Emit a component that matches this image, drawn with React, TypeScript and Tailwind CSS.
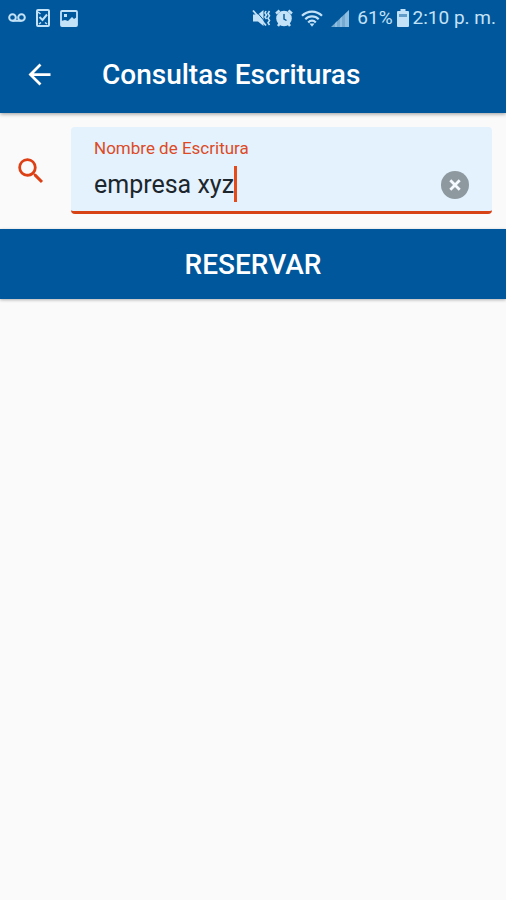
import { useRef, useState } from "react";
import { MdArrowBack, MdSearch } from "react-icons/md";

// status bar glyphs
function VoicemailIcon() {
  return (
    <svg width="18" height="12" viewBox="0 0 18 12" fill="none" stroke="currentColor" strokeWidth="2">
      <circle cx="4.5" cy="5.5" r="3.3" />
      <circle cx="13.5" cy="5.5" r="3.3" />
      <path d="M4.5 8.8h9" />
    </svg>
  );
}

function TaskIcon() {
  return (
    <svg width="14" height="18" viewBox="0 0 14 18" fill="none" stroke="currentColor" strokeWidth="2">
      <rect x="1" y="1" width="12" height="16" rx="1" />
      <path d="M3.5 8l3 3L11 5.5" />
      <path d="M2 3l2.5 2M3 15l2-1.5M11 15l-2-1.5" strokeWidth="1.5" />
    </svg>
  );
}

function PictureIcon() {
  return (
    <svg width="18" height="17" viewBox="0 0 18 17" fill="none">
      <rect x="1" y="1" width="16" height="15" rx="1" stroke="currentColor" strokeWidth="1.8" />
      <rect x="4" y="4" width="3" height="3" fill="currentColor" />
      <path d="M1 11l4-1 3 1 4-4 2 2 3-2v9H1z" fill="currentColor" />
    </svg>
  );
}

function MutedIcon() {
  return (
    <svg width="19" height="18" viewBox="0 0 19 18" fill="none">
      <path d="M1 5.5h5L11.5 1v16L6 12.5H1z" fill="currentColor" />
      <path d="M3 1l12 14" stroke="#01579b" strokeWidth="1" />
      <path d="M1 1.500l13 15" stroke="currentColor" strokeWidth="1.8" />
      <path
        d="M14 2l-1 2 1.500 2L13 8l1.500 2M17.500 2L16 4.500l1.500 2.300L16 9.200l1.500 2.300-1.500 2.300 1.500 2.200"
        stroke="currentColor"
        strokeWidth="1.6"
      />
    </svg>
  );
}

function AlarmIcon() {
  return (
    <svg width="18" height="18" viewBox="0 0 18 18" fill="none">
      <circle cx="9" cy="9.5" r="7.8" fill="currentColor" />
      <path d="M1 4.500L4.500 1.500M17 4.500l-3.500-3M3 17l2-3M15 17l-2-3" stroke="currentColor" strokeWidth="2.4" />
      <path d="M9 5v5l2.500 1.500" stroke="#01579b" strokeWidth="1.4" />
    </svg>
  );
}

function WifiIcon() {
  return (
    <svg width="22" height="17" viewBox="0 0 22 17" fill="none" stroke="currentColor" strokeWidth="2.2">
      <path d="M1 5.8C6.5 .2 15.5 .2 21 5.8" />
      <path d="M4.3 9.2C8 5.5 14 5.5 17.7 9.2" />
      <path d="M7.2 12.4C9.5 10 12.5 10 14.8 12.4" />
      <path d="M8.5 13.5h5L11 16.8z" fill="currentColor" stroke="none" />
    </svg>
  );
}

function SignalIcon() {
  return (
    <svg width="18" height="17" viewBox="0 0 18 17" fill="currentColor">
      <path d="M0 17L18 0v17z" opacity=".6" />
      <path d="M4 13l2-2v6H4zM9 8.5l2-2V17H9zM14 4l4-4v17h-4z" opacity=".35" />
    </svg>
  );
}

function BatteryIcon() {
  return (
    <svg width="12" height="18" viewBox="0 0 12 18" fill="currentColor">
      <path d="M3.5 0h5v2H11q1 0 1 1v14q0 1-1 1H1q-1 0-1-1V3q0-1 1-1h2.5z" />
      <path d="M2 5h8v3H2z" fill="#01579b" opacity=".5" />
    </svg>
  );
}

function ClearIcon() {
  return (
    <svg width="28" height="28" viewBox="0 0 28 28" fill="none">
      <circle cx="14" cy="14" r="14" fill="currentColor" />
      <path d="M9.3 9.3l9.4 9.4M18.7 9.3l-9.4 9.4" stroke="#f4faff" strokeWidth="2.8" />
    </svg>
  );
}

function StatusBar() {
  return (
    <div className="flex h-9 items-center justify-between pr-2.5 pl-2 text-[#c3e2f8]">
      <div className="flex items-center gap-2.5">
        <VoicemailIcon />
        <TaskIcon />
        <PictureIcon />
      </div>
      <div className="flex items-center gap-2 text-[19px] whitespace-nowrap">
        <div className="flex items-center gap-2">
          <div className="flex items-center gap-1">
            <MutedIcon />
            <AlarmIcon />
          </div>
          <WifiIcon />
          <SignalIcon />
        </div>
        <div className="flex items-center gap-1">
          <span>61%</span>
          <BatteryIcon />
          <span>2:10 p. m.</span>
        </div>
      </div>
    </div>
  );
}

function App() {
  const [name, setName] = useState("empresa xyz");
  const inputRef = useRef<HTMLInputElement | null>(null);

  const clearName = () => {
    setName("");
    inputRef.current?.focus();
  };

  return (
    <div className="min-h-screen bg-[#fafafa] font-[Roboto,sans-serif]">
      <header className="relative bg-[#01579b] text-white shadow-[0_1px_4px_rgba(0,0,0,0.4)]">
        <StatusBar />
        <div className="flex h-[77px] items-center gap-[46px] pl-[23px]">
          <button type="button" aria-label="Volver" className="cursor-pointer">
            <MdArrowBack size={33} />
          </button>
          <h1 className="text-[28px] font-medium whitespace-nowrap">Consultas Escrituras</h1>
        </div>
      </header>

      <main>
        <div className="flex items-center gap-[23px] px-3.5 pt-3.5 pb-[15px]">
          <MdSearch size={34} className="shrink-0 text-[#dd4014]" />
          <div className="flex h-[87px] min-w-0 flex-1 items-end rounded border-b-[3px] border-[#d84315] bg-[#e3f2fd] pr-[23px] pl-[23px]">
            <div className="min-w-0 flex-1 self-start pt-[11px]">
              <label htmlFor="nombre" className="block text-[17px] leading-5 text-[#dd4a25]">
                Nombre de Escritura
              </label>
              <div className="flex items-center pt-2">
                <input
                  id="nombre"
                  ref={inputRef}
                  type="text"
                  autoComplete="off"
                  value={name}
                  onChange={(e) => setName(e.target.value)}
                  className="field-sizing-content h-9 max-w-full pt-0.5 text-[25px] text-[#1c262c] caret-transparent outline-none"
                />
                {/* thick caret */}
                <span className="h-9 w-[3px] shrink-0 bg-[#e64a19]" />
              </div>
            </div>
            <button type="button" aria-label="Borrar" onClick={clearName} className="cursor-pointer pb-3 text-[#8e989f]">
              <ClearIcon />
            </button>
          </div>
        </div>
        <button
          type="button"
          className="block h-[70px] w-full cursor-pointer bg-[#01579b] pt-0.5 text-[28px] font-medium text-white shadow-[0_1px_3px_rgba(0,0,0,0.3)]"
        >
          RESERVAR
        </button>
      </main>
    </div>
  );
}

export default App;
